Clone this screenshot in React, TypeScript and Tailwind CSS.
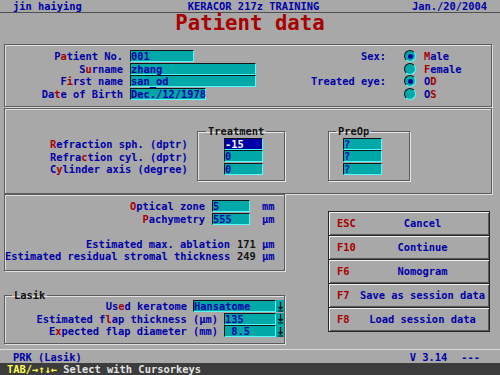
import React from "react";

const R = ({ children }: { children: React.ReactNode }) => (
  <span className="text-[#a80000]">{children}</span>
);

const Field = ({
  w,
  value,
  active,
}: {
  w: string;
  value: string;
  active?: boolean;
}) => (
  <div
    className={`h-[12px] shrink-0 whitespace-pre border border-[#141414] border-r-[#54fcfc] border-b-[#54fcfc] leading-[10px] ${w} ${
      active ? "bg-[#0000a8] text-white" : "bg-[#00a8a8] text-[#0000a8]"
    }`}
  >
    {value}
  </div>
);

const Radio = ({ on }: { on?: boolean }) => (
  <span className="flex h-[12px] w-[12px] shrink-0 items-center justify-center rounded-full border border-[#101010] border-r-[#54fcfc] border-b-[#54fcfc] bg-[#00a8a8]">
    {on && <span className="h-[5px] w-[5px] rounded-full bg-[#0000a8]" />}
  </span>
);

const Arrow = () => (
  <div className="flex h-[12px] w-[8px] shrink-0 items-center justify-center bg-[#00a8a8]">
    <svg width="7" height="11" viewBox="0 0 7 11">
      <path d="M3.5 1v7M1.5 6l2 2 2-2M1 10h5" stroke="#000" strokeWidth="1.2" fill="none" />
    </svg>
  </div>
);

const panel =
  "border border-[#5c5c5c] shadow-[inset_1px_1px_0_#e0e0e0,1px_1px_0_#e0e0e0]";

const buttons = [
  ["ESC", "Cancel"],
  ["F10", "Continue"],
  ["F6", "Nomogram"],
  ["F7", "Save as session data"],
  ["F8", "Load session data"],
];

export default function App() {
  return (
    <div className="flex h-[375px] w-[500px] flex-col overflow-hidden bg-[#a8a8a8] font-['DejaVu_Sans_Mono',monospace] text-[10.4px] font-bold leading-[12.5px] text-[#0000a8]">
      {/* top bar */}
      <div className="flex h-[13px] shrink-0 border-b border-[#505050] pt-[1px] leading-[11px]">
        <span className="ml-[13px]">jin haiying</span>
        <span className="ml-[106px]">KERACOR 217z TRAINING</span>
        <span className="ml-auto mr-[13px]">Jan./20/2004</span>
      </div>

      <div className="flex h-[31px] shrink-0 justify-center text-[20.7px] leading-[20px] text-[#a80000]">
        Patient data
      </div>

      {/* patient */}
      <div className={`ml-[4px] flex h-[63px] w-[488px] shrink-0 pt-[5px] ${panel}`}>
        <div className="flex w-[257px] flex-col">
          <div className="flex h-[12.5px] items-start">
            <span className="w-[118px] text-right">
              P<R>a</R>tient No.
            </span>
            <div className="ml-[7px]">
              <Field w="w-[64px]" value="001" />
            </div>
          </div>
          <div className="flex h-[12.5px] items-start">
            <span className="w-[118px] text-right">
              S<R>u</R>rname
            </span>
            <div className="ml-[7px]">
              <Field w="w-[126px]" value="zhang" />
            </div>
          </div>
          <div className="flex h-[12.5px] items-start">
            <span className="w-[118px] text-right">
              F<R>i</R>rst name
            </span>
            <div className="ml-[7px]">
              <Field w="w-[126px]" value="san_od" />
            </div>
          </div>
          <div className="flex h-[12.5px] items-start">
            <span className="w-[118px] text-right">
              Da<R>t</R>e of Birth
            </span>
            <div className="ml-[7px]">
              <Field w="w-[76px]" value="Dec./12/1978" />
            </div>
          </div>
        </div>
        <div className="flex flex-col">
          {[
            ["Sex:", true, <><R>M</R>ale</>],
            ["", false, <><R>F</R>emale</>],
            ["Treated eye:", true, <>O<R>D</R></>],
            ["", false, <>O<R>S</R></>],
          ].map(([label, on, text], i) => (
            <div key={i} className="flex h-[12.5px] items-start">
              <span className="w-[124px] text-right">{label as string}</span>
              <span className="ml-[18px]">
                <Radio on={on as boolean} />
              </span>
              <span className="ml-[8px]">{text as React.ReactNode}</span>
            </div>
          ))}
        </div>
      </div>

      {/* refraction */}
      <div className={`ml-[4px] mt-[1px] flex h-[86px] w-[488px] shrink-0 items-start pt-[16px] ${panel}`}>
        <div className="ml-[45px] mt-[13px] flex w-[137px] flex-col whitespace-pre">
          <span>
            <R>R</R>efraction sph. (dptr)
          </span>
          <span>
            Refra<R>c</R>tion cyl. (dptr)
          </span>
          <span>
            C<R>y</R>linder axis (degree)
          </span>
        </div>
        <fieldset className="ml-[10px] w-[88px] border border-[#5c5c5c] pb-[5px] shadow-[inset_1px_1px_0_#e8e8e8,1px_1px_0_#e8e8e8]">
          <legend className="ml-[8px] px-[2px] text-[#101010]">Treatment</legend>
          <div className="ml-[26px] flex flex-col">
            <div className="h-[12.5px]">
              <Field w="w-[39px]" value="-15" active />
            </div>
            <div className="h-[12.5px]">
              <Field w="w-[39px]" value="0" />
            </div>
            <div className="h-[12.5px]">
              <Field w="w-[39px]" value="0" />
            </div>
          </div>
        </fieldset>
        <fieldset className="ml-[43px] w-[82px] border border-[#5c5c5c] pb-[5px] shadow-[inset_1px_1px_0_#e8e8e8,1px_1px_0_#e8e8e8]">
          <legend className="ml-[7px] px-[2px] text-[#101010]">PreOp</legend>
          <div className="ml-[14px] flex flex-col">
            <div className="h-[12.5px]">
              <Field w="w-[39px]" value="?" />
            </div>
            <div className="h-[12.5px]">
              <Field w="w-[39px]" value="?" />
            </div>
            <div className="h-[12.5px]">
              <Field w="w-[39px]" value="?" />
            </div>
          </div>
        </fieldset>
      </div>

      {/* middle */}
      <div className="flex h-[155px] shrink-0">
        <div className="ml-[4px] flex w-[281px] flex-col">
          <div className={`flex h-[77px] flex-col pt-[5px] ${panel}`}>
            <div className="flex h-[12.5px] items-start">
              <span className="w-[200px] text-right">
                <R>O</R>ptical zone
              </span>
              <div className="ml-[7px]">
                <Field w="w-[38px]" value="5" />
              </div>
              <span className="ml-[12px]">mm</span>
            </div>
            <div className="flex h-[12.5px] items-start">
              <span className="w-[200px] text-right">
                <R>P</R>achymetry
              </span>
              <div className="ml-[7px]">
                <Field w="w-[38px]" value="555" />
              </div>
              <span className="ml-[12px]">µm</span>
            </div>
            <div className="h-[12.5px]" />
            <div className="flex h-[12.5px] items-start whitespace-pre">
              <span className="w-[225px] text-right">Estimated max. ablation</span>
              <span className="ml-[7px] w-[19px] text-[#141414]">171</span>
              <span className="ml-[6px]">µm</span>
            </div>
            <div className="flex h-[12.5px] items-start whitespace-pre">
              <span className="w-[225px] text-right">Estimated residual stromal thickness</span>
              <span className="ml-[7px] w-[19px] text-[#141414]">249</span>
              <span className="ml-[6px]">µm</span>
            </div>
          </div>

          <fieldset className="mt-[18px] border border-[#5c5c5c] pb-[5px] shadow-[inset_1px_1px_0_#e0e0e0,1px_1px_0_#e0e0e0]">
            <legend className="ml-[7px] px-[2px] text-[#101010]">Lasik</legend>
            <div className="-mt-[1.5px] flex flex-col whitespace-pre">
              <div className="flex h-[12.5px] items-start justify-end">
                <span>
                  Us<R>e</R>d keratome
                </span>
                <div className="ml-[6px]">
                  <Field w="w-[83px]" value="Hansatome" />
                </div>
                <Arrow />
              </div>
              <div className="flex h-[12.5px] items-start justify-end">
                <span>
                  Estimated f<R>l</R>ap thickness (µm)
                </span>
                <div className="ml-[6px]">
                  <Field w="w-[52px]" value="135" />
                </div>
                <Arrow />
              </div>
              <div className="flex h-[12.5px] items-start justify-end">
                <span>
                  E<R>x</R>pected flap diameter (mm)
                </span>
                <div className="ml-[6px]">
                  <Field w="w-[52px]" value=" 8.5" />
                </div>
                <Arrow />
              </div>
            </div>
          </fieldset>
        </div>

        <div className="ml-[43px] mt-[17px] flex w-[162px] flex-col">
          {buttons.map(([key, label], i) => (
            <div
              key={key}
              className={`flex h-[25px] items-center border border-[#262626] pl-[8px] shadow-[inset_1px_1px_0_#f4f4f4,inset_-1px_-1px_0_#5a5a5a] ${
                i > 0 ? "-mt-[1px]" : ""
              }`}
            >
              <span className="w-[19px] text-[#a80000]">{key}</span>
              <span className="flex-1 whitespace-pre text-center">{label}</span>
            </div>
          ))}
        </div>
      </div>

      {/* status */}
      <div className="flex h-[14px] shrink-0 border-t border-[#dcdcdc] pt-[1px] leading-[12px]">
        <span className="ml-[13px]">PRK (Lasik)</span>
        <span className="ml-auto">V 3.14</span>
        <span className="ml-[14px] mr-[20px]">---</span>
      </div>
      <div className="flex h-[12px] shrink-0 bg-[#3c3c3c] pl-[7px] leading-[12px] text-[#e4e4e4]">
        <span className="whitespace-pre">
          <span className="text-[#fcfc54]">TAB/→↑↓←</span> Select with Cursorkeys
        </span>
      </div>
    </div>
  );
}
